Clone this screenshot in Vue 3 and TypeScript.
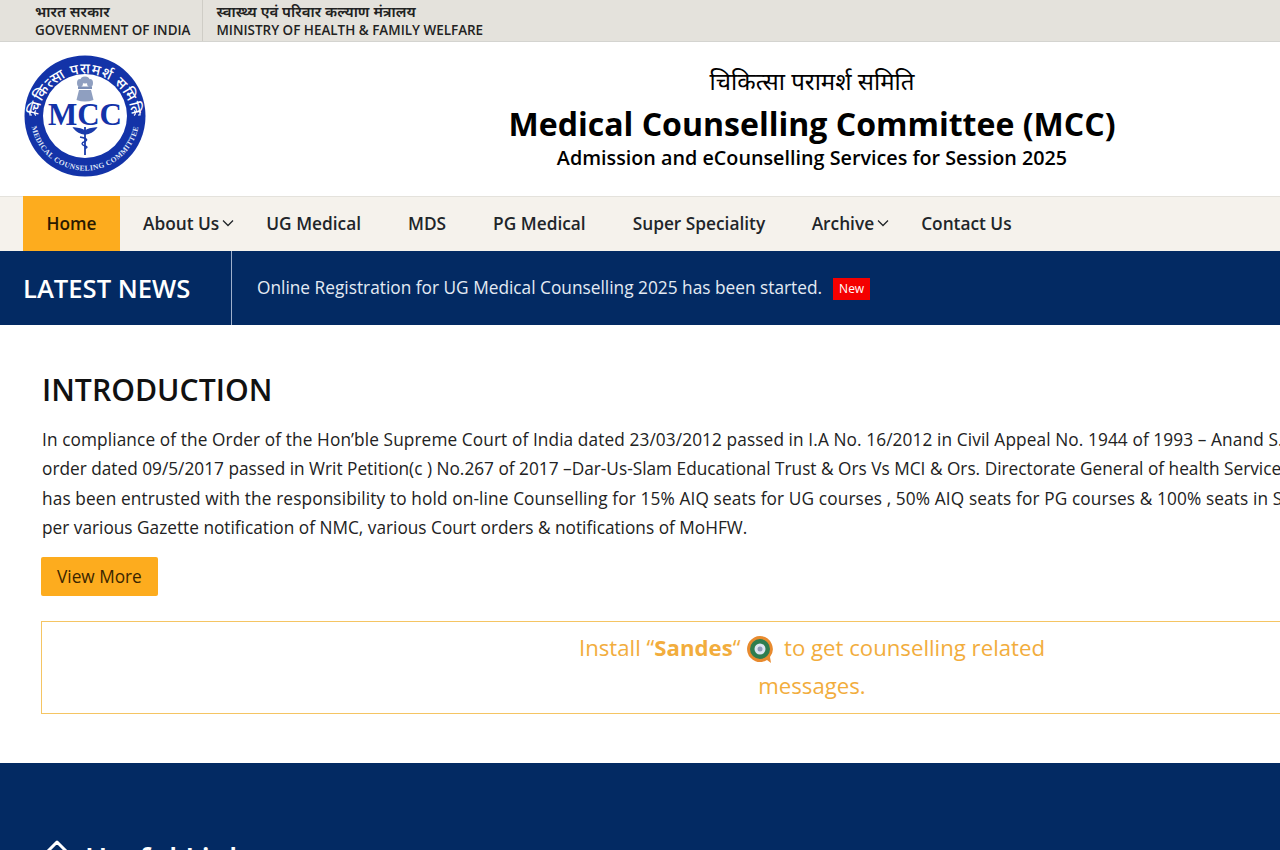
<script setup lang="ts">
interface NavItem {
  label: string;
  hasMenu?: boolean;
  active?: boolean;
}

const navItems: NavItem[] = [
  { label: "Home", active: true },
  { label: "About Us", hasMenu: true },
  { label: "UG Medical" },
  { label: "MDS" },
  { label: "PG Medical" },
  { label: "Super Speciality" },
  { label: "Archive", hasMenu: true },
  { label: "Contact Us" },
];

const introLines: string[] = [
  "In compliance of the Order of the Hon’ble Supreme Court of India dated 23/03/2012 passed in I.A No. 16/2012 in Civil Appeal No. 1944 of 1993 – Anand S. Biji Vs State of Kerala & Ors. and",
  "order dated 09/5/2017 passed in Writ Petition(c ) No.267 of 2017 –Dar-Us-Slam Educational Trust & Ors Vs MCI & Ors. Directorate General of health Services, MoHFW",
  "has been entrusted with the responsibility to hold on-line Counselling for 15% AIQ seats for UG courses , 50% AIQ seats for PG courses & 100% seats in Super Speciality as",
  "per various Gazette notification of NMC, various Court orders & notifications of MoHFW.",
];
</script>

<template>
  <div class="page">
    <div class="gov-bar">
      <div class="gov-col">
        <span class="hi">भारत सरकार</span>
        <span class="en">GOVERNMENT OF INDIA</span>
      </div>
      <div class="gov-col second">
        <span class="hi">स्वास्थ्य एवं परिवार कल्याण मंत्रालय</span>
        <span class="en">MINISTRY OF HEALTH &amp; FAMILY WELFARE</span>
      </div>
    </div>

    <header class="site-header">
      <svg class="logo" width="124" height="122" viewBox="0 0 124 122">
        <defs>
          <path id="arc-top" d="M 16.4 77 A 47 47 0 1 1 107.6 77" />
          <path id="arc-bottom" d="M 8.6 72 A 54.5 54.5 0 0 0 115.4 72" />
        </defs>
        <circle cx="62" cy="61" r="60.5" fill="#1333a8" />
        <circle cx="62" cy="61" r="42" fill="#fff" />
        <text class="ring-hi" fill="#fff"><textPath href="#arc-top" startOffset="50%" text-anchor="middle">चिकित्सा परामर्श समिति</textPath></text>
        <text class="ring-en" fill="#dfe5f7"><textPath href="#arc-bottom" startOffset="50%" text-anchor="middle">MEDICAL COUNSELING COMMITTEE</textPath></text>
        <g fill="none" stroke="#fff" stroke-width="1.2">
          <path d="M13 55.5a3 3 0 0 0 0 5M9 56h-2v4h2" />
          <path d="M111 55.5a3 3 0 0 1 0 5M115 56h2v4h-2" />
        </g>
        <!-- emblem -->
        <g fill="#8f9fc0">
          <ellipse cx="62" cy="25" rx="4.5" ry="3.5" />
          <ellipse cx="57" cy="28" rx="3" ry="4" />
          <ellipse cx="67" cy="28" rx="3" ry="4" />
          <rect x="55" y="31.5" width="14" height="2.5" fill="#7c8fb6" />
          <path d="M56 35h12l2.5 10q-8.5 3-17 0z" />
        </g>
        <text class="mcc" x="62" y="70" text-anchor="middle" fill="#1333a8">MCC</text>
        <!-- caduceus -->
        <g fill="none" stroke="#1a3bab" stroke-width="1.4">
          <path d="M51 73q7 .5 11 3q4-2.5 11-3q-4 5-11 6q-7-1-11-6z" fill="#1a3bab" />
          <path d="M62 72v28" stroke-width="1.8" />
          <path d="M57 82q10 2 5 4.5q-6 2 0 4.5q4 1 0 2.5" />
        </g>
      </svg>
      <div class="titles">
        <div class="title-hi">चिकित्सा परामर्श समिति</div>
        <h1>Medical Counselling Committee (MCC)</h1>
        <div class="subtitle">Admission and eCounselling Services for Session 2025</div>
      </div>
    </header>

    <nav class="main-nav">
      <a v-for="item in navItems" :key="item.label" class="nav-link" :class="{ active: item.active, 'has-menu': item.hasMenu }">
        {{ item.label }}
        <svg v-if="item.hasMenu" class="chevron" width="12" height="8" viewBox="0 0 12 8">
          <path d="M1 1.5l5 5 5-5" fill="none" stroke="#212529" stroke-width="1.3" />
        </svg>
      </a>
    </nav>

    <section class="news">
      <div class="news-label">LATEST NEWS</div>
      <div class="news-text">
        <span class="news-copy">Online Registration for UG Medical Counselling 2025 has been started.</span>
        <span class="badge">New</span>
      </div>
    </section>

    <main class="intro">
      <h2>INTRODUCTION</h2>
      <p v-for="line in introLines" :key="line" class="intro-line">{{ line }}</p>
      <a class="view-more">View More</a>
      <div class="sandes">
        Install “<b>Sandes</b>“
        <svg class="sandes-icon" width="28" height="30" viewBox="0 0 28 30">
          <path d="M14 1a13 13 0 1 0 7 24l4 3-1-6A13 13 0 0 0 14 1z" fill="#e88a2e" />
          <circle cx="14" cy="14" r="10" fill="#2f7d4f" />
          <circle cx="14" cy="14" r="5.5" fill="#dfe6f2" />
          <circle cx="14" cy="14" r="2.5" fill="#8d9ab8" />
        </svg>
        to get counselling related<br />messages.
      </div>
    </main>

    <footer class="site-footer">
      <h3>
        <svg width="24" height="30" viewBox="0 0 24 30">
          <path d="M12 2 L21 11 V28 H3 V11 Z" fill="none" stroke="#fff" stroke-width="3" stroke-linejoin="round" />
        </svg>
        Useful Links
      </h3>
    </footer>
  </div>
</template>

<style scoped>
.page {
  width: 1624px;
  font-family: "Open Sans", "Noto Sans", sans-serif;
  color: #212529;
}

.gov-bar {
  display: flex;
  height: 42px;
  box-sizing: border-box;
  padding-left: 35px;
  background: #e4e2dc;
  border-bottom: 1px solid #d4d4d0;
}

.gov-col {
  display: flex;
  flex-direction: column;
  padding: 2px 12px 0 0;
  line-height: 19px;
  color: #222;
}

.gov-col.second {
  border-left: 1px solid #cfcdc6;
  padding-left: 13px;
}

.gov-col .hi {
  font-size: 15px;
  font-weight: 600;
}

.gov-col .en {
  font-size: 13.45px;
  font-weight: 600;
  white-space: nowrap;
}

.site-header {
  position: relative;
  height: 154px;
  box-sizing: border-box;
  background: #fff;
  padding-top: 16px;
}

.logo {
  position: absolute;
  left: 23px;
  top: 13px;
}

.ring-hi {
  font-size: 14.5px;
  font-weight: 500;
  letter-spacing: 0.8px;
}

.ring-en {
  font-family: "Liberation Serif", serif;
  font-size: 7.5px;
  font-weight: 700;
  letter-spacing: 0.4px;
}

.mcc {
  font-family: "Liberation Serif", serif;
  font-size: 31px;
  font-weight: 700;
}

.titles {
  text-align: center;
  color: #000;
}

.title-hi {
  font-size: 24px;
  line-height: 46px;
}

.titles h1 {
  margin: 0;
  font-size: 32.05px;
  line-height: 40px;
  font-weight: 700;
}

.subtitle {
  font-size: 19.75px;
  font-weight: 600;
  line-height: 24px;
  margin-top: 2px;
}

.main-nav {
  display: flex;
  height: 55px;
  box-sizing: border-box;
  padding-left: 23px;
  background: #f5f2ec;
  border-top: 1px solid #e4e2dc;
}

.nav-link {
  display: flex;
  align-items: center;
  padding: 0 23.5px 2px;
  font-size: 17.3px;
  font-weight: 600;
  color: #212529;
  white-space: nowrap;
}

.nav-link.active {
  margin-top: -1px;
  background: #fdac1e;
  color: #2a1a00;
  padding: 0 23.5px 1px;
}

.nav-link.has-menu {
  padding-right: 8.5px;
  padding-left: 23px;
}

.chevron {
  margin-left: 3px;
}

.news {
  display: flex;
  height: 74px;
  background: #032a63;
  color: #fff;
}

.news-label {
  display: flex;
  align-items: center;
  width: 208px;
  padding-left: 23px;
  border-right: 1px solid #9fb0cc;
  font-size: 25.6px;
  font-weight: 600;
}

.news-text {
  display: flex;
  align-items: center;
  gap: 11px;
  padding-left: 25px;
  font-size: 17.3px;
  font-weight: 500;
  color: #e4eaf4;
}

.news-copy {
  margin-bottom: 1px;
}

.badge {
  margin-top: 2px;
  padding: 2px 6px;
  background: #f40000;
  color: #fff;
  font-size: 12px;
  font-weight: 500;
  line-height: 18px;
}

.intro {
  box-sizing: border-box;
  height: 438px;
  padding: 44px 41px 0;
  background: #fff;
}

.intro h2 {
  margin: 0 0 15px 1px;
  font-size: 30.2px;
  font-weight: 600;
  line-height: 41px;
  color: #111;
}

.intro-line {
  margin: 0 0 0 1px;
  font-size: 17.25px;
  line-height: 29.4px;
  white-space: nowrap;
  color: #222;
}

.intro-line:nth-of-type(1) {
  letter-spacing: 0.1px;
}

.intro-line:nth-of-type(3) {
  letter-spacing: 0.12px;
}

.view-more {
  display: inline-block;
  margin-top: 14px;
  padding: 0 16px;
  background: #fdac1e;
  border-radius: 2px;
  font-size: 17.25px;
  line-height: 39px;
  color: #3a2500;
}

.sandes {
  margin-top: 25px;
  box-sizing: border-box;
  height: 93px;
  padding-top: 7px;
  border: 1px solid #f5c563;
  text-align: center;
  font-size: 22.2px;
  line-height: 38px;
  color: #f2ad3d;
}

.sandes-icon {
  vertical-align: middle;
  margin: 0 4px 0 0;
}

.site-footer {
  height: 400px;
  padding: 75px 45px 0;
  background: #032a63;
  color: #fff;
}

.site-footer h3 {
  display: flex;
  align-items: center;
  gap: 16px;
  margin: 0;
  font-size: 30px;
  font-weight: 600;
  line-height: 41px;
}

.site-footer svg {
  margin-top: -8px;
}
</style>

<style>
html,
body {
  overflow: hidden;
  height: 850px;
}
</style>
